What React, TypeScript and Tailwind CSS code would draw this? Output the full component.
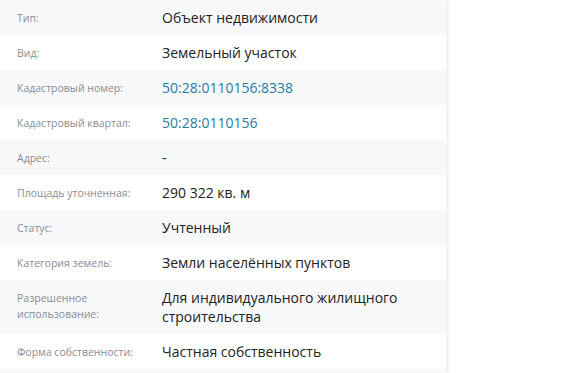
const rows: { label: string; value: string; link?: boolean }[] = [
  { label: "Тип:", value: "Объект недвижимости" },
  { label: "Вид:", value: "Земельный участок" },
  { label: "Кадастровый номер:", value: "50:28:0110156:8338", link: true },
  { label: "Кадастровый квартал:", value: "50:28:0110156", link: true },
  { label: "Адрес:", value: "-" },
  { label: "Площадь уточненная:", value: "290 322 кв. м" },
  { label: "Статус:", value: "Учтенный" },
  { label: "Категория земель:", value: "Земли населённых пунктов" },
  { label: "Разрешенное использование:", value: "Для индивидуального жилищного строительства" },
  { label: "Форма собственности:", value: "Частная собственность" },
  { label: "", value: "" },
];

export default function App() {
  return (
    <div className="h-[373px] w-[571px] overflow-hidden bg-white font-['Open_Sans',sans-serif]">
      <div className="w-[446px] h-full shadow-[2px_0_3px_rgba(0,0,0,0.07)]">
        {rows.map((r, i) => (
          <div
            key={i}
            className={`flex py-2 ${i % 2 === 0 ? "bg-[#f7f8fa]" : "bg-white"}`}
          >
            <div className="w-[162px] shrink-0 pl-[17px] pr-4 pt-[2px] text-[10.5px] leading-4 text-[#8a8d91]">
              {r.label === "Разрешенное использование:" ? (
                <>
                  Разрешенное
                  <br />
                  использование:
                </>
              ) : (
                r.label
              )}
            </div>
            <div
              className={`pr-6 text-[14px] leading-[19px] ${
                r.link ? "text-[#2a7ba3]" : "text-[#222]"
              }`}
            >
              {r.value || "\u00a0"}
            </div>
          </div>
        ))}
      </div>
    </div>
  );
}
